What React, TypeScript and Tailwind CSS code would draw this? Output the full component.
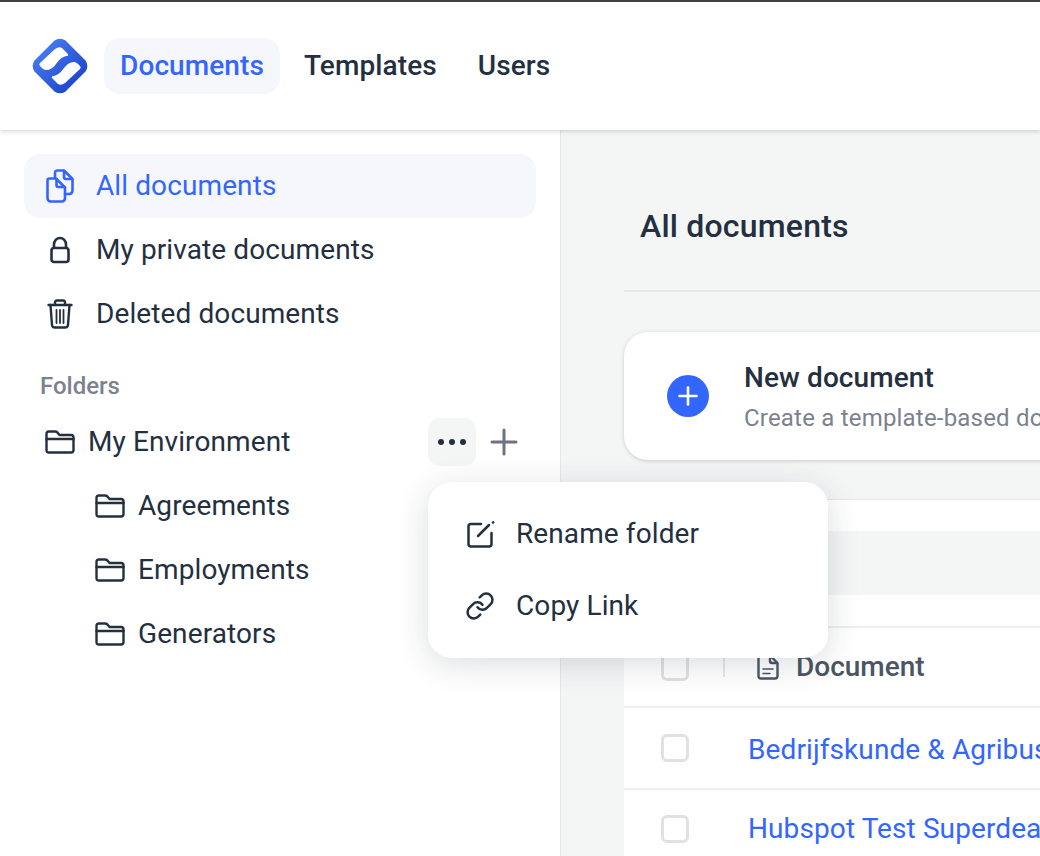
const font = { fontFamily: "Roboto, 'Liberation Sans', sans-serif" };

const Logo = () => (
  <svg width="56" height="56" viewBox="0 0 56 56" className="shrink-0">
    <defs>
      <linearGradient id="lg" x1="0.1" y1="0.1" x2="0.9" y2="0.9">
        <stop offset="0" stopColor="#4a80f5" />
        <stop offset="1" stopColor="#1a3fc8" />
      </linearGradient>
    </defs>
    <path
      d="M22.5 2.5 Q28 -1.2 33.5 2.5 L53.5 22.5 Q57.2 28 53.5 33.5 L33.5 53.5 Q28 57.2 22.5 53.5 L2.5 33.5 Q-1.2 28 2.5 22.5 Z"
      fill="url(#lg)"
    />
    <path
      d="M8 25 L23 11 Q27 8 30 10 L35 15 Q37.5 17.5 35 18 C30 18.5 27 22 24 26 C21 30 18 32 14 32 Q12 32 10 30 L8 28 Q6.5 26.5 8 25 Z"
      fill="#fff"
    />
    <path
      transform="rotate(180 28 28)"
      d="M8 25 L23 11 Q27 8 30 10 L35 15 Q37.5 17.5 35 18 C30 18.5 27 22 24 26 C21 30 18 32 14 32 Q12 32 10 30 L8 28 Q6.5 26.5 8 25 Z"
      fill="#fff"
    />
  </svg>
);

const FolderIcon = () => (
  <svg width="30" height="24" viewBox="0 0 30 24" fill="none" stroke="#242f3f" strokeWidth="2.4" strokeLinejoin="round" strokeLinecap="round" className="shrink-0">
    <path d="M1.5 9 V4 Q1.5 1.5 4 1.5 H10 Q11.5 1.5 12.5 2.6 L14.5 5 H26 Q28.5 5 28.5 7.5 V20 Q28.5 22.5 26 22.5 H4 Q1.5 22.5 1.5 20 Z" />
    <path d="M1.5 9 H28.5" />
  </svg>
);

const DocsIcon = () => (
  <svg width="28" height="34" viewBox="0 0 28 34" fill="none" stroke="#3366ff" strokeWidth="2.6" strokeLinejoin="round" strokeLinecap="round" className="shrink-0">
    <path d="M3.5 9.5 H10 L19 18.5 V29 Q19 32.5 15.5 32.5 H5 Q1.5 32.5 1.5 29 V11.5 Q1.5 9.5 3.5 9.5 Z" />
    <path d="M10.5 10 V16 Q10.5 18 12.5 18 H18.5" />
    <path d="M9 9 V4 Q9 1.5 11.5 1.5 H18 L26.5 10 V21 Q26.5 25 23 25 H19" />
    <path d="M18 2 V8 Q18 10 20 10 H26" />
  </svg>
);

const LockIcon = () => (
  <svg width="20" height="28" viewBox="0 0 20 28" fill="none" stroke="#242f3f" strokeWidth="2.6" strokeLinejoin="round" className="shrink-0">
    <path d="M4 12 V8.5 a6 6.5 0 0 1 12 0 V12" />
    <rect x="1.5" y="12" width="17" height="14" rx="2.5" />
  </svg>
);

const TrashIcon = () => (
  <svg width="26" height="30" viewBox="0 0 26 30" fill="none" stroke="#242f3f" strokeWidth="2.4" strokeLinejoin="round" strokeLinecap="round" className="shrink-0">
    <path d="M1.5 6 H24.5" />
    <path d="M8 6 V3.5 Q8 1.5 10 1.5 H16 Q18 1.5 18 3.5 V6" />
    <path d="M3.5 6 L5 26 Q5.2 28.5 8 28.5 H18 Q20.8 28.5 21 26 L22.5 6" />
    <path d="M9.5 11 V24 M13 11 V24 M16.5 11 V24" strokeWidth="1.8" />
  </svg>
);

const EditIcon = () => (
  <svg width="28" height="28" viewBox="0 0 28 28" fill="none" stroke="#242f3f" strokeWidth="2.5" strokeLinejoin="round" strokeLinecap="round" className="shrink-0">
    <path d="M14 4 H4 Q1.5 4 1.5 6.5 V24 Q1.5 26.5 4 26.5 H22 Q24.5 26.5 24.5 24 V13" />
    <path d="M11 16 L22 5" />
    <path d="M26 2.5 L26.2 2.3" />
  </svg>
);

const LinkIcon = () => (
  <svg width="30" height="30" viewBox="0 0 24 24" fill="none" stroke="#242f3f" strokeWidth="2" strokeLinecap="round" strokeLinejoin="round" className="shrink-0">
    <path d="M10 13a5 5 0 0 0 7.54.54l3-3a5 5 0 0 0-7.07-7.07l-1.72 1.71" />
    <path d="M14 11a5 5 0 0 0-7.54-.54l-3 3a5 5 0 0 0 7.07 7.07l1.71-1.71" />
  </svg>
);

const DocIcon = () => (
  <svg width="22" height="26" viewBox="0 0 22 26" fill="none" stroke="#4b5563" strokeWidth="2.4" strokeLinejoin="round" strokeLinecap="round" className="shrink-0">
    <path d="M4 1.5 H13 L20.5 9 V22 Q20.5 24.5 18 24.5 H4 Q1.5 24.5 1.5 22 V4 Q1.5 1.5 4 1.5 Z" />
    <path d="M13 2 V7 Q13 9 15 9 H20" />
    <path d="M6 15 H16 M6 19.5 H13" strokeWidth="1.6" />
  </svg>
);

const Checkbox = () => <div className="w-7 h-7 rounded-md border-[3px] border-[#dfe1e4] bg-white shrink-0" />;

const SideItem = ({ icon, label, active }: { icon: React.ReactNode; label: string; active?: boolean }) => (
  <div className={`flex items-center h-16 rounded-2xl ${active ? "bg-[#f6f7fd] text-[#3366ff]" : "text-[#242f3f]"}`}>
    <div className="w-[72px] flex justify-center shrink-0">{icon}</div>
    <span className="text-[28px] tracking-[0.1px]">{label}</span>
  </div>
);

const FolderRow = ({ label }: { label: string }) => (
  <div className="flex items-center h-16 pl-[71px] gap-[13px]">
    <FolderIcon />
    <span className="text-[28px] tracking-[0.1px] text-[#242f3f]">{label}</span>
  </div>
);

export default function App() {
  return (
    <div style={font} className="relative w-[1040px] h-[856px] overflow-hidden bg-white flex flex-col border-t-2 border-[#3f3f46]">
      <header className="relative z-10 h-[128px] shrink-0 bg-white flex items-center pl-8 shadow-[0_1px_5px_rgba(31,41,55,0.22)]">
        <Logo />
        <nav className="flex items-center ml-4 text-[28px] font-medium tracking-[0.1px] text-[#242f3f]">
          <div className="h-14 w-[176px] flex items-center justify-center rounded-2xl bg-[#f6f7fd] text-[#3366ff]">Documents</div>
          <div className="ml-6">Templates</div>
          <div className="ml-[41px]">Users</div>
        </nav>
      </header>

      <div className="flex flex-1 min-h-0">
        <aside className="w-[561px] shrink-0 bg-white border-r border-[#e5e7eb] pt-6 px-6">
          <SideItem active icon={<DocsIcon />} label="All documents" />
          <SideItem icon={<LockIcon />} label="My private documents" />
          <SideItem icon={<TrashIcon />} label="Deleted documents" />
          <div className="mt-[26px] pl-[16px] text-[24px] font-medium text-[#7b828e] leading-[28px]">Folders</div>
          <div className="-mx-6 mt-[10px]">
            <div className="flex items-center h-16 pl-[45px] pr-[42px]">
              <FolderIcon />
              <span className="ml-[13px] text-[28px] tracking-[0.1px] text-[#242f3f]">My Environment</span>
              <div className="ml-auto w-12 h-12 rounded-xl bg-[#f4f6f6] flex items-center justify-center gap-[5px]">
                <span className="w-1.5 h-1.5 rounded-full bg-[#242f3f]" />
                <span className="w-1.5 h-1.5 rounded-full bg-[#242f3f]" />
                <span className="w-1.5 h-1.5 rounded-full bg-[#242f3f]" />
              </div>
              <svg width="28" height="28" viewBox="0 0 28 28" stroke="#6b7280" strokeWidth="3" strokeLinecap="round" className="ml-[14px]">
                <path d="M14 2 V26 M2 14 H26" />
              </svg>
            </div>
            <div className="ml-6">
              <FolderRow label="Agreements" />
              <FolderRow label="Employments" />
              <FolderRow label="Generators" />
            </div>
          </div>
        </aside>

        <main className="flex-1 min-w-0 bg-[#f4f6f6] pl-[63px]">
          <div className="h-[162px] pt-8 border-b-2 border-[#e5e7e8] flex items-center pl-4">
            <h1 className="text-[32px] tracking-[0.2px] font-medium text-[#242f3f]">All documents</h1>
          </div>
          <div className="mt-10 h-[128px] w-[700px] rounded-3xl bg-white shadow-[0_1px_4px_rgba(31,41,55,0.2)] flex items-center pl-[43px] gap-[35px]">
            <div className="w-[42px] h-[42px] rounded-full bg-[#3366ff] flex items-center justify-center shrink-0">
              <svg width="20" height="20" viewBox="0 0 20 20" stroke="#fff" strokeWidth="2.6" strokeLinecap="round">
                <path d="M10 1.5 V18.5 M1.5 10 H18.5" />
              </svg>
            </div>
            <div className="whitespace-nowrap pt-1">
              <div className="text-[28px] tracking-[0.1px] font-medium text-[#242f3f] leading-[36px]">New document</div>
              <div className="text-2xl tracking-[0.2px] text-[#7b828e] leading-[36px] mt-1">Create a template-based document</div>
            </div>
          </div>

          <div className="mt-[39px] w-[700px] bg-white border-t border-[#e5e7e8]">
            <div className="h-[31px]" />
            <div className="h-16 bg-[#f4f6f6]" />
            <div className="h-[33px] border-b-2 border-[#eceef0]" />
            <div className="h-[80px] border-b-2 border-[#eceef0] flex items-center pl-[37px]">
              <Checkbox />
              <div className="w-0.5 h-5 bg-[#e5e7e8] ml-[34px]" />
              <div className="ml-8 flex items-center gap-[17px]">
                <DocIcon />
                <span className="text-[28px] font-medium text-[#4b5563]">Document</span>
              </div>
            </div>
            <div className="h-[82px] border-b-2 border-[#eceef0] flex items-center pl-[37px]">
              <Checkbox />
              <span className="ml-[59px] mt-[3px] text-[28px] tracking-[0.1px] text-[#3366ff] whitespace-nowrap">Bedrijfskunde &amp; Agribusiness</span>
            </div>
            <div className="h-[78px] flex items-center pl-[37px]">
              <Checkbox />
              <span className="ml-[59px] text-[28px] tracking-[0.1px] text-[#3366ff] whitespace-nowrap">Hubspot Test Superdeal</span>
            </div>
          </div>
        </main>
      </div>

      <div className="absolute z-20 left-[428px] top-[480px] w-[400px] h-[176px] rounded-3xl bg-white shadow-[0_6px_32px_rgba(31,41,55,0.16)] flex flex-col justify-center">
        <div className="flex items-center h-[72px] pl-[39px] gap-[21px] text-[28px] tracking-[0.1px] text-[#242f3f]">
          <EditIcon />
          <span>Rename folder</span>
        </div>
        <div className="flex items-center h-[72px] pl-[37px] gap-[21px] text-[28px] tracking-[0.1px] text-[#242f3f]">
          <LinkIcon />
          <span>Copy Link</span>
        </div>
      </div>
    </div>
  );
}
